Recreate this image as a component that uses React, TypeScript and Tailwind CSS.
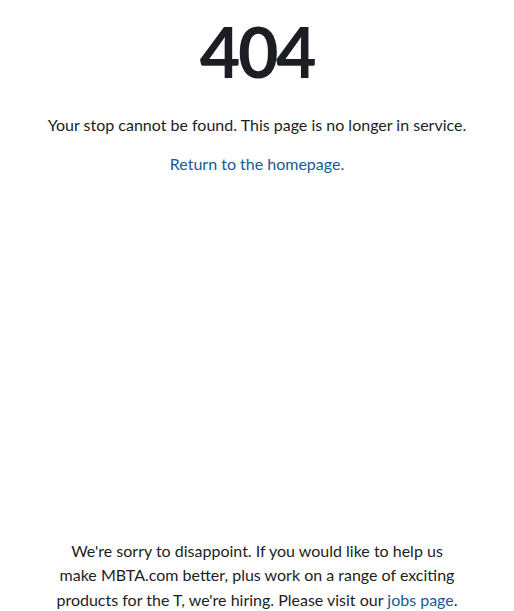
import React from 'react';

const App: React.FC = () => {
  return (
    <div
      className="h-screen w-full bg-white flex flex-col justify-between overflow-hidden text-[#1c1e23] text-center"
      style={{ fontFamily: 'Lato, "Noto Sans", sans-serif' }}
    >
      {/* Error message */}
      <div className="flex flex-col items-center pt-[13px]">
        <h1 className="text-[70px] leading-[76px] font-bold tracking-[-0.035em]">404</h1>
        <p className="mt-[24px] text-[16px] leading-[24px]">
          Your stop cannot be found. This page is no longer in service.
        </p>
        <a href="#" className="mt-[15px] text-[16px] leading-[24px] text-[#165c96]">
          Return to the homepage.
        </a>
      </div>

      {/* Hiring note */}
      <p className="mx-auto max-w-[410px] text-[16px] leading-[24.5px] -mb-[1px]">
        We're sorry to disappoint. If you would like to help us make MBTA.com better, plus work on a
        range of exciting products for the T, we're hiring. Please visit our{' '}
        <a href="#" className="text-[#165c96]">jobs page</a>.
      </p>
    </div>
  );
};

export default App;
